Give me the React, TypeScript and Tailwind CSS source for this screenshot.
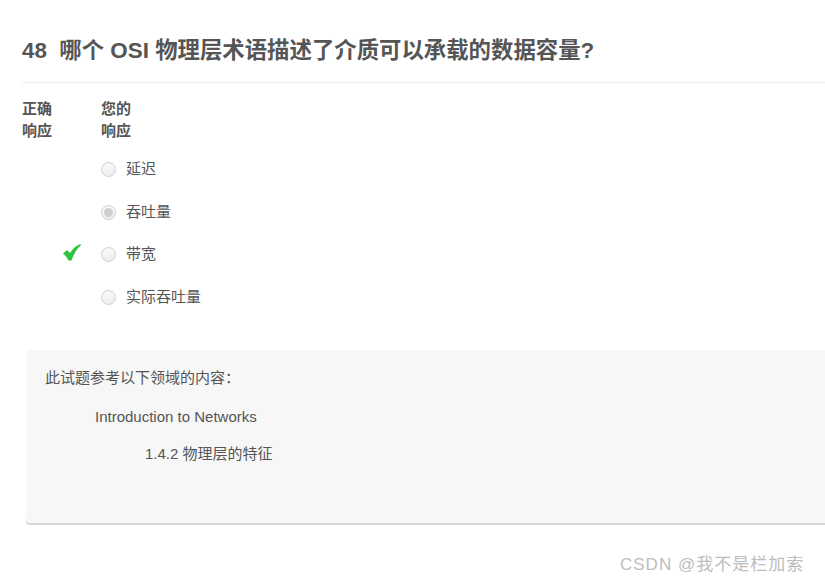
import React from "react";

const font = { fontFamily: '"Liberation Sans", Arial, "Noto Sans CJK SC", sans-serif' };

function Radio({ checked }: { checked?: boolean }) {
  return (
    <span className="flex h-[15px] w-[15px] items-center justify-center rounded-full border border-[#cfcfcf] bg-gradient-to-b from-[#fafafa] to-[#ededed]">
      {checked && <span className="h-[9px] w-[9px] rounded-full bg-[#cfcfcf]" />}
    </span>
  );
}

function Check() {
  return (
    <svg width="18" height="17" viewBox="0 0 18 17">
      <path d="M0 9.5 L4 6 L7 9 C9.5 5 13 1.5 17.5 0 L18 1 C14 4.5 11 9.5 8.5 16.5 L5.5 16.5 C4 13.5 2.5 11.5 0 9.5 Z" fill="#2ec43f" />
    </svg>
  );
}

export default function App() {
  const options = [
    { label: "延迟", checked: false, correct: false },
    { label: "吞吐量", checked: true, correct: false },
    { label: "带宽", checked: false, correct: true },
    { label: "实际吞吐量", checked: false, correct: false },
  ];
  return (
    <div className="relative h-[585px] w-[825px] overflow-hidden bg-white text-[#555]" style={font}>
      <div className="pl-[22px]">
        <h1 className="pt-[36px] text-[22.4px] font-bold leading-[30px] text-[#555]">
          48&nbsp; 哪个 OSI 物理层术语描述了介质可以承载的数据容量?
        </h1>
        <div className="mt-[16px] h-px bg-[#eeeeee]" />
        <div className="mt-[15px] flex text-[15px] font-bold leading-[22px] text-[#555]">
          <div className="w-[79px]">
            正确
            <br />
            响应
          </div>
          <div>
            您的
            <br />
            响应
          </div>
        </div>
        <div className="mt-[6px] flex flex-col">
          {options.map((o) => (
            <div key={o.label} className="flex h-[42.7px] items-center">
              <div className="flex w-[79px] justify-end pr-[20px]">
                {o.correct ? <span className="-mt-[4px]"><Check /></span> : <span className="h-[17px]" />}
              </div>
              <Radio checked={o.checked} />
              <span className="ml-[10px] text-[15px] text-[#555]">{o.label}</span>
            </div>
          ))}
        </div>
        <div className="ml-[4px] mt-[31px] h-[173px] w-[820px] rounded-[4px] bg-[#f7f7f7] pl-[19px] pt-[18px] text-[15px] leading-[20px] text-[#555] shadow-[0_2px_0_0_#d6d6d6]">
          <p>此试题参考以下领域的内容：</p>
          <p className="ml-[50px] mt-[19px]">Introduction to Networks</p>
          <p className="ml-[100px] mt-[17px]">1.4.2 物理层的特征</p>
        </div>
      </div>
      <div className="absolute left-[620px] top-[554px] text-[17px] leading-[22px] tracking-[1px] text-[#bdbdbd]">
        CSDN @我不是栏加索
      </div>
    </div>
  );
}
